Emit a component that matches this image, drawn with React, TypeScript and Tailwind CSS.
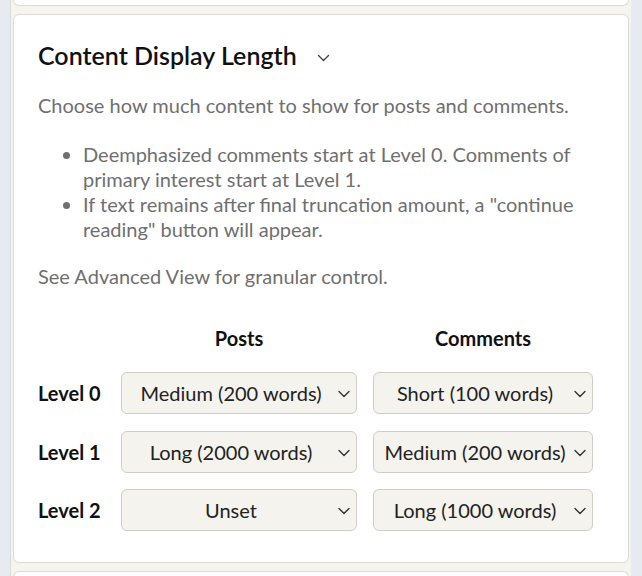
import { ChangeEvent, useState } from "react";

const FONT = { fontFamily: "Lato, 'Open Sans', sans-serif" };

type Level = { label: string; post: string; comment: string };

const postOptions = ["Unset", "Short (100 words)", "Medium (200 words)", "Long (1000 words)", "Long (2000 words)"];
const commentOptions = ["Unset", "Short (100 words)", "Medium (200 words)", "Long (1000 words)"];

function Chevron({ className }: { className?: string }) {
  return (
    <svg viewBox="0 0 12 8" className={className} fill="none" stroke="currentColor" strokeWidth="1.4">
      <path d="M1 1.5l5 5 5-5" strokeLinecap="round" strokeLinejoin="round" />
    </svg>
  );
}

function LengthSelect({
  value,
  options,
  onChange,
}: {
  value: string;
  options: string[];
  onChange: (v: string) => void;
}) {
  return (
    <div className="relative h-[42px] w-full">
      <select
        value={value}
        onChange={(e: ChangeEvent<HTMLSelectElement>) => onChange(e.target.value)}
        className="h-full w-full appearance-none rounded-[6px] border border-[#cfcdc8] bg-[#f5f3ee] pl-[8px] pr-[24px] text-center text-[20px] text-[#222] outline-none [text-align-last:center]"
        style={FONT}
      >
        {options.map((o) => (
          <option key={o}>{o}</option>
        ))}
      </select>
      <Chevron className="pointer-events-none absolute right-[7px] top-[18px] h-[8px] w-[12px] text-[#333]" />
    </div>
  );
}

export default function App() {
  const [levels, setLevels] = useState<Level[]>([
    { label: "Level 0", post: "Medium (200 words)", comment: "Short (100 words)" },
    { label: "Level 1", post: "Long (2000 words)", comment: "Medium (200 words)" },
    { label: "Level 2", post: "Unset", comment: "Long (1000 words)" },
  ]);

  const update = (i: number, key: "post" | "comment", v: string) => {
    setLevels((prev) => prev.map((l, idx) => (idx === i ? { ...l, [key]: v } : l)));
  };

  return (
    <div className="min-h-screen bg-[#e6ebf2]" style={FONT}>
      <div className="ml-[10px] w-[621px] border-l border-[#dcdad5] bg-[#f6f4ee] pl-[2px] pr-[2px]">
        {/* previous card, mostly scrolled away */}
        <div className="h-[6px] rounded-b-[6px] border border-t-0 border-[#dddbd6] bg-white" />

        <section className="mt-[8px] h-[549px] rounded-[6px] border border-[#dddbd6] bg-white pl-[24px] pr-[34px] pt-[25px]">
          <div className="flex h-[30px] items-center">
            <h2 className="text-[25px] font-semibold leading-[30px] text-[#111]">Content Display Length</h2>
            <Chevron className="ml-[20px] mt-[5px] h-[8px] w-[13px] text-[#444]" />
          </div>

          <p className="mt-[23px] text-[20px] leading-[25px] text-[#6f6f6f]">
            Choose how much content to show for posts and comments.
          </p>

          <ul className="mt-[24px] list-disc pl-[45px] text-[20px] leading-[25px] text-[#6f6f6f]">
            <li>Deemphasized comments start at Level 0. Comments of primary interest start at Level 1.</li>
            <li>If text remains after final truncation amount, a "continue reading" button will appear.</li>
          </ul>

          <p className="mt-[22px] text-[20px] leading-[25px] text-[#6f6f6f]">See Advanced View for granular control.</p>

          <div className="mt-[37px] flex text-[20px] font-bold leading-[25px] text-[#111]">
            <div className="w-[83px]" />
            <div className="w-[236px] text-center">Posts</div>
            <div className="ml-[16px] w-[220px] text-center">Comments</div>
          </div>

          <div className="mt-[21px] flex flex-col gap-[16.5px]">
            {levels.map((l, i) => (
              <div key={l.label} className="flex items-center">
                <div className="w-[83px] text-[20px] font-bold text-[#111]">{l.label}</div>
                <div className="w-[236px]">
                  <LengthSelect value={l.post} options={postOptions} onChange={(v) => update(i, "post", v)} />
                </div>
                <div className="ml-[16px] w-[220px]">
                  <LengthSelect value={l.comment} options={commentOptions} onChange={(v) => update(i, "comment", v)} />
                </div>
              </div>
            ))}
          </div>
        </section>

        <div className="mt-[8px] h-[20px] rounded-t-[6px] border border-b-0 border-[#dddbd6] bg-white" />
      </div>
    </div>
  );
}
